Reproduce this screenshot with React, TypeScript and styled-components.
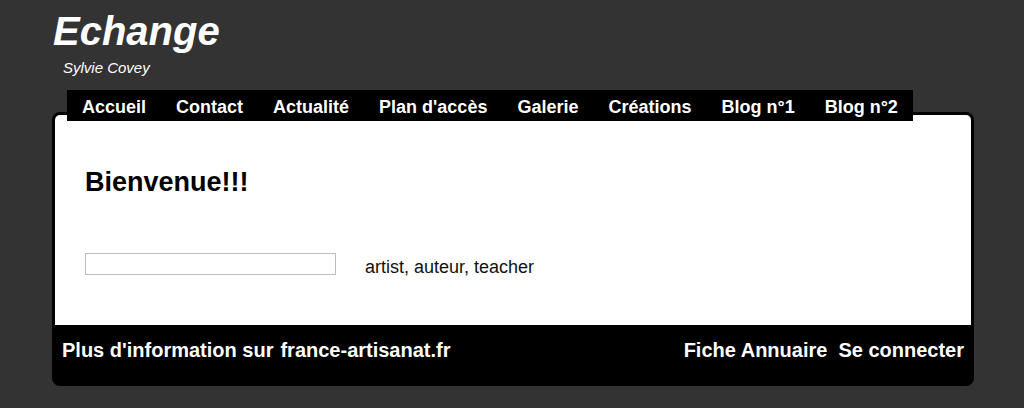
import styled, { createGlobalStyle } from "styled-components";

const GlobalStyle = createGlobalStyle`
  html, body {
    margin: 0;
    padding: 0;
    background: #333333;
    font-family: "Liberation Sans", Arial, sans-serif;
  }
`;

const Page = styled.div`
  padding: 0 50px 21px 52px;
  box-sizing: border-box;
  width: 1024px;
`;

const Header = styled.header`
  padding-left: 1px;
`;

const Title = styled.h1`
  margin: 8px 0 0;
  font-size: 40px;
  line-height: 46px;
  font-weight: bold;
  font-style: italic;
  color: #ffffff;
`;

const Subtitle = styled.div`
  margin-top: 4px;
  padding-left: 10px;
  font-size: 15px;
  line-height: 20px;
  font-style: italic;
  color: #ffffff;
`;

const Nav = styled.nav`
  position: relative;
  z-index: 1;
  display: inline-flex;
  margin: 12px 0 0 15px;
  height: 31px;
  background: #000000;
`;

const NavItem = styled.a`
  display: flex;
  align-items: center;
  padding: 3px 15px 0;
  font-size: 18px;
  font-weight: bold;
  color: #ffffff;
  text-decoration: none;
  white-space: nowrap;
`;

const Card = styled.div`
  margin-top: -9px;
  width: 922px;
  box-sizing: border-box;
  border: 3px solid #000000;
  border-radius: 8px;
  background: #000000;
  overflow: hidden;
`;

const Content = styled.main`
  background: #ffffff;
  padding: 52px 30px 50px;
`;

const Heading = styled.h2`
  margin: 0;
  font-size: 27px;
  line-height: 31px;
  font-weight: bold;
  color: #000000;
`;

const Row = styled.div`
  display: flex;
  align-items: flex-start;
  gap: 29px;
  margin-top: 55px;
  height: 22px;
`;

const SearchBox = styled.input`
  width: 251px;
  height: 22px;
  box-sizing: border-box;
  border: 1px solid #bdbdbd;
  padding: 0;
  margin: 0;
  outline: none;
`;

const Tagline = styled.span`
  margin-top: 3px;
  font-size: 18px;
  line-height: 22px;
  color: #111111;
`;

const Footer = styled.footer`
  display: flex;
  justify-content: space-between;
  align-items: flex-start;
  height: 58px;
  box-sizing: border-box;
  padding: 14px 7px 0;
`;

const LinkGroup = styled.div<{ $gap: number }>`
  display: flex;
  gap: ${(p) => p.$gap}px;
`;

const FooterLink = styled.a`
  font-size: 20px;
  line-height: 23px;
  font-weight: bold;
  color: #ffffff;
  text-decoration: none;
  white-space: nowrap;
`;

const menu = [
  "Accueil",
  "Contact",
  "Actualité",
  "Plan d'accès",
  "Galerie",
  "Créations",
  "Blog n°1",
  "Blog n°2",
];

export default function App() {
  return (
    <>
      <GlobalStyle />
      <Page>
        <Header>
          <Title>Echange</Title>
          <Subtitle>Sylvie Covey</Subtitle>
        </Header>
        <Nav>
          {menu.map((item) => (
            <NavItem key={item}>{item}</NavItem>
          ))}
        </Nav>
        <Card>
          <Content>
            <Heading>Bienvenue!!!</Heading>
            <Row>
              <SearchBox type="text" />
              <Tagline>artist, auteur, teacher</Tagline>
            </Row>
          </Content>
          <Footer>
            <LinkGroup $gap={7}>
              <FooterLink>Plus d'information sur</FooterLink>
              <FooterLink>france-artisanat.fr</FooterLink>
            </LinkGroup>
            <LinkGroup $gap={11}>
              <FooterLink>Fiche Annuaire</FooterLink>
              <FooterLink>Se connecter</FooterLink>
            </LinkGroup>
          </Footer>
        </Card>
      </Page>
    </>
  );
}
